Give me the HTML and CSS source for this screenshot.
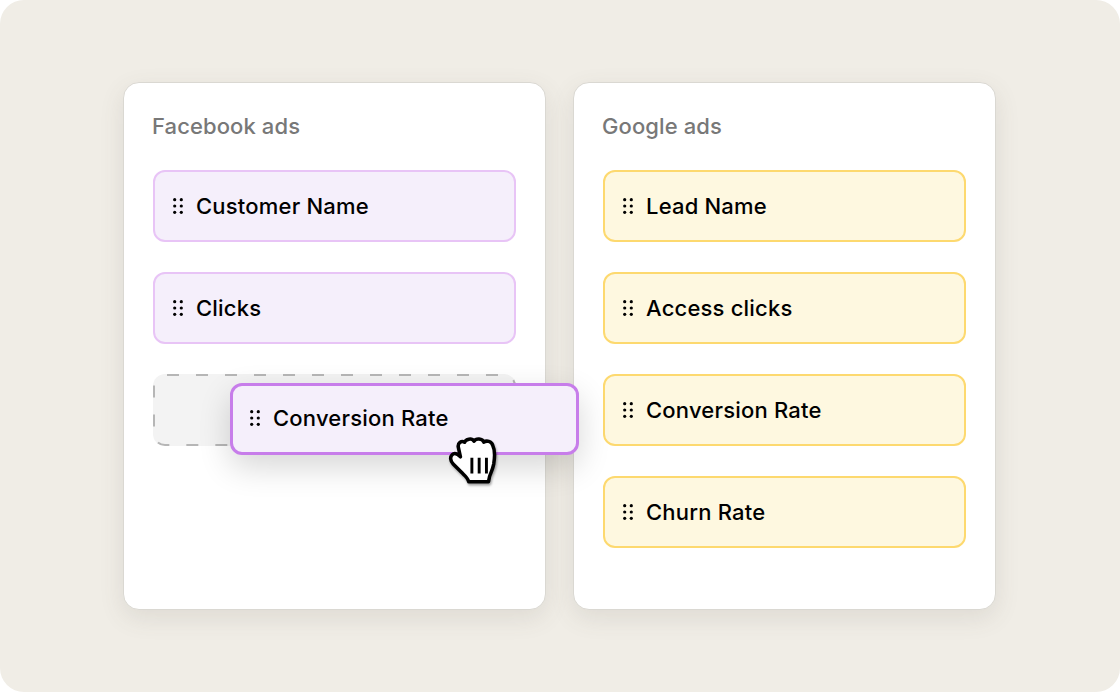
FILE: index.html
```html
<!DOCTYPE html>
<html lang="en">
<head>
  <meta charset="UTF-8">
  <title>Field mapping</title>
  <link rel="stylesheet" href="styles.css">
</head>
<body>
  <div class="stage">
    <div class="board">

      <div class="card">
        <h2>Facebook ads</h2>
        <div class="field purple">
          <svg class="grip" viewBox="0 0 10 16"><circle cx="1.7" cy="1.7" r="1.6"/><circle cx="8.3" cy="1.7" r="1.6"/><circle cx="1.7" cy="8" r="1.6"/><circle cx="8.3" cy="8" r="1.6"/><circle cx="1.7" cy="14.3" r="1.6"/><circle cx="8.3" cy="14.3" r="1.6"/></svg>
          Customer Name
        </div>
        <div class="field purple">
          <svg class="grip" viewBox="0 0 10 16"><circle cx="1.7" cy="1.7" r="1.6"/><circle cx="8.3" cy="1.7" r="1.6"/><circle cx="1.7" cy="8" r="1.6"/><circle cx="8.3" cy="8" r="1.6"/><circle cx="1.7" cy="14.3" r="1.6"/><circle cx="8.3" cy="14.3" r="1.6"/></svg>
          Clicks
        </div>
        <div class="slot">
          <svg viewBox="0 0 363 72"><rect x="1" y="1" width="361" height="70" rx="11" stroke-dasharray="12 17" stroke-dashoffset="-2"/></svg>
        </div>

        <div class="field purple dragging">
          <svg class="grip" viewBox="0 0 10 16"><circle cx="1.7" cy="1.7" r="1.6"/><circle cx="8.3" cy="1.7" r="1.6"/><circle cx="1.7" cy="8" r="1.6"/><circle cx="8.3" cy="8" r="1.6"/><circle cx="1.7" cy="14.3" r="1.6"/><circle cx="8.3" cy="14.3" r="1.6"/></svg>
          Conversion Rate
          <svg class="hand" viewBox="0 0 50 50">
            <path d="M19 43 C18 39 15 37 12 34 L4 26 C1 23 1 19 3 17 C5 15 8 16 11 19 L9 10 C8 6 12 3 15 5 C16 2 22 0.5 24 4 C26 1 32 1 33.5 5 C36 3 41 4 42 8 C44 12 44 20 43 26 C42 31 40 35 39 38 L38 43 Z" fill="#fff" stroke="#000" stroke-width="3.4" stroke-linejoin="round"/>
            <path d="M22 20V35M29 20V35M36 20V35" fill="none" stroke="#000" stroke-width="2.8"/>
          </svg>
        </div>
      </div>

      <div class="card">
        <h2>Google ads</h2>
        <div class="field yellow">
          <svg class="grip" viewBox="0 0 10 16"><circle cx="1.7" cy="1.7" r="1.6"/><circle cx="8.3" cy="1.7" r="1.6"/><circle cx="1.7" cy="8" r="1.6"/><circle cx="8.3" cy="8" r="1.6"/><circle cx="1.7" cy="14.3" r="1.6"/><circle cx="8.3" cy="14.3" r="1.6"/></svg>
          Lead Name
        </div>
        <div class="field yellow">
          <svg class="grip" viewBox="0 0 10 16"><circle cx="1.7" cy="1.7" r="1.6"/><circle cx="8.3" cy="1.7" r="1.6"/><circle cx="1.7" cy="8" r="1.6"/><circle cx="8.3" cy="8" r="1.6"/><circle cx="1.7" cy="14.3" r="1.6"/><circle cx="8.3" cy="14.3" r="1.6"/></svg>
          Access clicks
        </div>
        <div class="field yellow">
          <svg class="grip" viewBox="0 0 10 16"><circle cx="1.7" cy="1.7" r="1.6"/><circle cx="8.3" cy="1.7" r="1.6"/><circle cx="1.7" cy="8" r="1.6"/><circle cx="8.3" cy="8" r="1.6"/><circle cx="1.7" cy="14.3" r="1.6"/><circle cx="8.3" cy="14.3" r="1.6"/></svg>
          Conversion Rate
        </div>
        <div class="field yellow">
          <svg class="grip" viewBox="0 0 10 16"><circle cx="1.7" cy="1.7" r="1.6"/><circle cx="8.3" cy="1.7" r="1.6"/><circle cx="1.7" cy="8" r="1.6"/><circle cx="8.3" cy="8" r="1.6"/><circle cx="1.7" cy="14.3" r="1.6"/><circle cx="8.3" cy="14.3" r="1.6"/></svg>
          Churn Rate
        </div>
      </div>

    </div>
  </div>
</body>
</html>
```

FILE: styles.css
```css
html, body {
  margin: 0;
  background: #fff;
}
body {
  font-family: Inter, "Open Sans", sans-serif;
  color: #000;
}
.stage {
  width: 1120px;
  height: 692px;
  box-sizing: border-box;
  padding: 82px 0 0 123px;
  background: #f0ede6;
  border-radius: 24px;
  overflow: hidden;
}
.board {
  display: flex;
  gap: 27px;
}
.card {
  position: relative;
  width: 423px;
  height: 528px;
  box-sizing: border-box;
  padding: 30px 29px 0;
  background: #fff;
  border: 1px solid #dad8d2;
  border-radius: 16px;
  box-shadow: 0 8px 24px rgba(90, 85, 70, 0.12);
}
.card h2 {
  margin: 0 0 30px -1px;
  height: 27px;
  line-height: 27px;
  font-size: 22px;
  font-weight: 450;
  letter-spacing: 0.1px;
  color: #787878;
}
.field {
  display: flex;
  align-items: center;
  gap: 13px;
  width: 363px;
  height: 72px;
  box-sizing: border-box;
  margin-bottom: 30px;
  padding-left: 18px;
  border: 2px solid;
  border-radius: 12px;
  font-size: 22px;
  font-weight: 450;
  letter-spacing: 0.2px;
  line-height: 1;
}
.purple {
  background: #f5effb;
  border-color: #e8c4f6;
}
.yellow {
  background: #fef8e0;
  border-color: #fdd96f;
}
.grip {
  width: 10px;
  height: 16px;
  flex: none;
  fill: #000;
}
.slot {
  width: 363px;
  height: 72px;
  background: #f3f3f3;
  border-radius: 12px;
}
.slot svg {
  display: block;
  fill: none;
  stroke: #b6b6b6;
  stroke-width: 2;
}
.dragging {
  position: absolute;
  z-index: 1;
  left: 106px;
  top: 300px;
  width: 349px;
  margin: 0;
  padding: 0 0 2px 17px;
  border: 3px solid #c77dea;
  box-shadow: 0 12px 32px rgba(0, 0, 0, 0.16);
}
.hand {
  position: absolute;
  left: 216px;
  top: 51px;
  width: 52px;
  height: 52px;
  overflow: visible;
  filter: drop-shadow(1px 2px 1px rgba(0, 0, 0, 0.35));
}
```
